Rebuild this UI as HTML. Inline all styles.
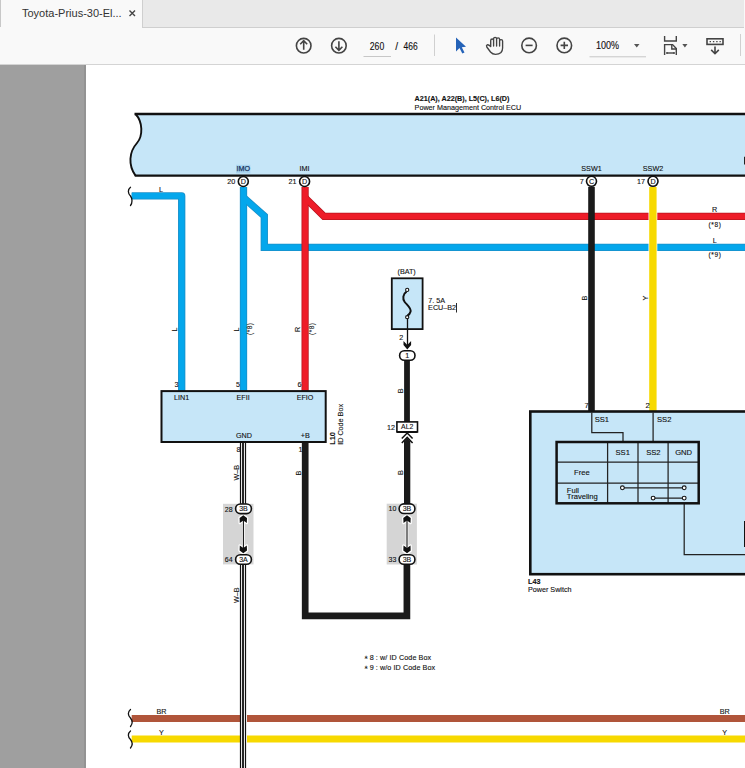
<!DOCTYPE html>
<html><head><meta charset="utf-8">
<style>
html,body{margin:0;padding:0;width:745px;height:768px;overflow:hidden;background:#fff;font-family:"Liberation Sans",sans-serif;}
#tabbar{position:absolute;left:0;top:0;width:745px;height:28px;background:#f9f9f9;}
#tabgrey{position:absolute;left:142px;top:0;width:601px;height:27px;background:#e9e9e9;border-left:1px solid #cfcfcf;border-bottom:1px solid #cfcfcf;}
#tabl{position:absolute;left:0;top:0;width:1px;height:27px;background:#c8c8c8;}
#tabtitle{position:absolute;left:22px;top:7px;font-size:11px;color:#333;white-space:nowrap;}
#toolbar{position:absolute;left:0;top:28px;width:745px;height:36px;background:#f9f9f9;}
#tbline{position:absolute;left:0;top:64px;width:745px;height:1px;background:#d4d4d4;}
#greyL{position:absolute;left:0;top:65px;width:86px;height:704px;background:#9f9f9f;}
#greyLe{position:absolute;left:84px;top:65px;width:2px;height:704px;background:#939393;}
svg{position:absolute;left:0;top:0;}
</style></head><body>
<div id="tabbar"></div>
<div id="tabl"></div>
<div id="tabgrey"></div>
<div id="tabtitle">Toyota-Prius-30-El...</div>
<div id="toolbar"></div>
<div id="tbline"></div>
<div id="greyL"></div>
<div id="greyLe"></div>

<svg width="745" height="768" viewBox="0 0 745 768">
<!-- tab close -->
<path d="M129.5,10.5 L135,16 M135,10.5 L129.5,16" stroke="#444" stroke-width="1.4"/>
<!-- toolbar icons -->
<g fill="none" stroke="#444" stroke-width="1.6">
  <circle cx="303.7" cy="45.7" r="7.3"/>
  <path d="M303.7,49.8 V40.8 M300.2,44.2 L303.7,40.6 L307.2,44.2"/>
  <circle cx="338.9" cy="45.7" r="7.3"/>
  <path d="M338.9,41.3 V50.3 M335.4,46.8 L338.9,50.4 L342.4,46.8"/>
  <circle cx="529.1" cy="45.4" r="7.3"/>
  <path d="M525.6,45.4 H532.6"/>
  <circle cx="564.3" cy="45.4" r="7.3"/>
  <path d="M560.6,45.4 H568 M564.3,41.7 V49.1"/>
</g>
<path d="M456,37.5 L456,51.5 L459.5,48 L462.3,53.5 L464.5,52.5 L461.8,47.2 L466,46.8 Z" fill="#2563b8"/>
<!-- hand -->
<path d="M490.7,46 L490.7,40.5 Q490.7,39 492.2,39 Q493.6,39 493.6,40.5 L493.6,46 L493.6,38.7 Q493.6,37.3 495.1,37.3 Q496.6,37.3 496.6,38.7 L496.6,46 L496.6,39.3 Q496.6,37.9 498.1,37.9 Q499.6,37.9 499.6,39.3 L499.6,46 L499.6,41 Q499.6,39.6 501.1,39.6 Q502.6,39.6 502.6,41 L502.6,48 Q502.6,54.3 495.5,54.3 Q492.5,54.3 490.5,52 L486.8,47 Q486,45.5 487.2,44.8 Q488.5,44.3 490.7,46.5 Z" fill="none" stroke="#444" stroke-width="1.35" stroke-linejoin="round"/>
<g fill="#3a3a3a" font-size="10.2" font-family="Liberation Sans">
<text x="369.8" y="49.5" textLength="14.4" lengthAdjust="spacingAndGlyphs">260</text>
<text x="395.3" y="49.5">/</text>
<text x="403.6" y="49.5" textLength="14.1" lengthAdjust="spacingAndGlyphs">466</text>
<text x="596" y="49" textLength="23.1" lengthAdjust="spacingAndGlyphs">100%</text>
</g>
<path d="M363.5,56.5 H391" stroke="#c7c7c7" stroke-width="1"/>
<path d="M589.5,56.8 H646" stroke="#c7c7c7" stroke-width="1"/>
<path d="M434.5,34.5 V56" stroke="#d0d0d0" stroke-width="1"/>
<path d="M740.5,34 V56" stroke="#d0d0d0" stroke-width="1"/>
<path d="M634,44 L639.5,44 L636.75,47.6 Z M682.3,44 L687.5,44 L684.9,47.6 Z" fill="#555"/>
<!-- fit icon -->
<g fill="none" stroke="#444" stroke-width="1.4">
<path d="M664.6,36 V41 H676.3 V36"/>
<path d="M664.6,55 V44.6 H672.6 L676.3,48.6 V55"/>
<path d="M671.8,44.6 V49 H676.3"/>
<path d="M667.2,53 H673.8"/>
</g>
<circle cx="667" cy="53" r="1" fill="#444"/><circle cx="674" cy="53" r="1" fill="#444"/>
<!-- keyboard icon -->
<g fill="none" stroke="#444" stroke-width="1.6">
<rect x="707" y="38.8" width="16" height="5.6"/>
<path d="M715,46.5 V53.5 M711.2,49.9 L715,53.7 L718.8,49.9"/>
</g>
<path d="M709.6,41.6 H720.8" stroke="#444" stroke-width="1.4" stroke-dasharray="1.4,1.9"/>
</svg>

<svg width="745" height="768" viewBox="0 0 745 768" style="font-family:'Liberation Sans',sans-serif">
<style>
text{fill:#111;stroke:#111;stroke-width:0.12px;}
</style>
<!-- ECU box -->
<path d="M135,114 C143,122 143,136 137,143 C129,152 128,165 135.5,175.6 L746,175.6 L746,114 Z" fill="#c6e6f8"/>
<path d="M135.5,114 C143,122 143,136 137,143 C129,152 128,165 135.5,175.6" fill="none" stroke="#111" stroke-width="1.9"/>
<path d="M134.5,114 H746 M134.8,175.6 H746" fill="none" stroke="#111" stroke-width="2.4"/>
<path d="M744.8,156.8 V164.5" stroke="#222" stroke-width="1.6"/>
<g font-size="7.2">
<text x="414.6" y="101.1" font-weight="bold">A21(A), A22(B), L5(C), L6(D)</text>
<text x="414.6" y="109.5">Power Management Control ECU</text>
</g>
<!-- wires -->
<g fill="none" stroke-width="7" stroke-linejoin="miter">
<g stroke="#1b8fc8" stroke-width="7.3">
<path d="M131.7,195.9 H181.7 V391" stroke-linejoin="round"/>
<path d="M243.5,187 V391"/>
<path d="M243.5,197.6 L264.3,216 V247.3 H746"/>
</g>
<g stroke="#04a7ec" stroke-width="5.7">
<path d="M131.7,195.9 H181.7 V391" stroke-linejoin="round"/>
<path d="M243.5,187 V391"/>
<path d="M243.5,197.6 L264.3,216 V247.3 H746"/>
</g>
<g stroke="#b8141e" stroke-width="7.2">
<path d="M305.1,187 V391"/>
<path d="M305.1,197.8 L324,216.4 H746"/>
</g>
<g stroke="#ee1c28" stroke-width="5.6">
<path d="M305.1,187 V391"/>
<path d="M305.1,197.8 L324,216.4 H746"/>
</g>
<path d="M591.5,187 V411" stroke="#1a1a1a" stroke-width="6.6"/>
<path d="M652.9,208 V256" stroke="#fff" stroke-width="8.8"/>
<path d="M652.9,187 V411" stroke="#f7d900" stroke-width="7.4"/>
<!-- black +B loop -->
<path d="M305.2,442 V615.8 H406.9 V564" stroke="#1a1a1a" stroke-width="6.7"/>
<path d="M406.9,504 V441" stroke="#1a1a1a" stroke-width="5.8"/>
<path d="M407,431 V360" stroke="#1a1a1a" stroke-width="5.8"/>
<!-- bottom wires -->
<path d="M131.7,718.5 H240 M247,718.5 H746" stroke="#b0553a" stroke-width="6.8"/>
<path d="M131.7,739 H240 M247,739 H746" stroke="#f7d900" stroke-width="6.8"/>
<!-- W-B wire -->
<path d="M243,442 V504 M243,564 V768" stroke="#111" stroke-width="6.2"/>
<path d="M243,442 V504 M243,564 V768" stroke="#fff" stroke-width="3.8"/>
<path d="M243,442 V504 M243,564 V768" stroke="#111" stroke-width="1.8"/>
</g>
<!-- braces -->
<g fill="none" stroke="#111" stroke-width="1.3" stroke-linecap="round">
<path d="M130.5,187.3 C127.5,189.5 127.8,193.5 130.5,196 C132.5,198.5 132.5,203 130.5,205.5"/>
<path d="M130.5,709.5 C127.5,712 127.8,715.5 130.5,718 C132.5,720.5 132.5,724 130.5,726.5"/>
<path d="M130.5,731 C127.5,733.5 127.8,737 130.5,739.5 C132.5,742 132.5,745.5 130.5,748"/>
</g>
<!-- ECU connectors -->
<g fill="#fff" stroke="#111" stroke-width="1.6">
<circle cx="243.3" cy="181.5" r="5"/>
<circle cx="304.6" cy="181.5" r="5"/>
<circle cx="591.5" cy="181.3" r="5"/>
<circle cx="653" cy="181.3" r="5"/>
</g>
<rect x="236" y="164.8" width="14.3" height="8.6" fill="#a9d4f0"/>
<g font-size="7.2" text-anchor="middle">
<text x="243.4" y="183.9">D</text>
<text x="304.7" y="183.9">D</text>
<text x="591.6" y="183.7">C</text>
<text x="653.1" y="183.7">D</text>
</g>
<g font-size="7.2" text-anchor="end">
<text x="235.3" y="183.9">20</text>
<text x="296.5" y="183.9">21</text>
<text x="583.7" y="183.7">7</text>
<text x="645" y="183.7">17</text>
</g>
<text x="243.3" y="170.9" font-size="7.2" text-anchor="middle" style="fill:#1a3560;stroke:#1a3560;stroke-width:0.25px">IMO</text>
<g font-size="7.2" text-anchor="middle">
<text x="304.6" y="170.9">IMI</text>
<text x="591.5" y="170.9">SSW1</text>
<text x="653" y="170.9">SSW2</text>
<text x="161" y="191.5">L</text>
<text x="714.6" y="211.9">R</text>
<text x="708.5" y="226.6" font-size="6.5" text-anchor="start" textLength="12.5" lengthAdjust="spacing">(*8)</text>
<text x="714.8" y="242.9">L</text>
<text x="708.5" y="257.3" font-size="6.5" text-anchor="start" textLength="12.5" lengthAdjust="spacing">(*9)</text>
<text x="161.5" y="714.2">BR</text>
<text x="161.3" y="734.6">Y</text>
<text x="724.7" y="714.2">BR</text>
<text x="724.7" y="734.9">Y</text>
</g>
<!-- rotated wire labels -->
<g font-size="7.2" text-anchor="middle">
<text transform="translate(177.4,329.5) rotate(-90)">L</text>
<text transform="translate(238.8,329.5) rotate(-90)">L</text>
<text transform="translate(252.3,329) rotate(-90)" font-size="6.5" textLength="12" lengthAdjust="spacing">(*8)</text>
<text transform="translate(300.2,329.5) rotate(-90)">R</text>
<text transform="translate(313.8,329) rotate(-90)" font-size="6.5" textLength="12" lengthAdjust="spacing">(*8)</text>
<text transform="translate(586.6,298.1) rotate(-90)">B</text>
<text transform="translate(648.4,298.1) rotate(-90)">Y</text>
<text transform="translate(238.7,472.8) rotate(-90)">W–B</text>
<text transform="translate(238.7,595.2) rotate(-90)">W–B</text>
<text transform="translate(301,473) rotate(-90)">B</text>
<text transform="translate(402.5,390.8) rotate(-90)">B</text>
<text transform="translate(402.5,472.5) rotate(-90)">B</text>
</g>
<!-- ID Code Box -->
<rect x="161.5" y="391.1" width="164.2" height="50.9" fill="#c6e6f8" stroke="#111" stroke-width="2"/>
<g font-size="7.2">
<text x="174" y="399.8">LIN1</text>
<text x="236.5" y="399.8">EFII</text>
<text x="296.7" y="399.8">EFIO</text>
<text x="236" y="438.2">GND</text>
<text x="300.8" y="438.2">+B</text>
<text x="174.6" y="386.6">3</text>
<text x="236" y="386.6">5</text>
<text x="297.4" y="386.6">6</text>
<text x="236.5" y="452.3">8</text>
<text x="298.5" y="452.3">1</text>
</g>
<text transform="translate(334.9,444.8) rotate(-90)" font-size="7.4" font-weight="bold">L10</text>
<text transform="translate(343.1,444.8) rotate(-90)" font-size="7.4" textLength="40.8" lengthAdjust="spacingAndGlyphs">ID Code Box</text>
<!-- fuse -->
<rect x="391.8" y="278.3" width="30.8" height="50.8" fill="#c6e6f8" stroke="#111" stroke-width="1.8"/>
<path d="M406.6,291.6 C402.8,294 402.4,299 404.7,302 C407,305 411.4,308 410.6,311.6 C410.1,313.6 408.9,314.9 407.4,315.7" fill="none" stroke="#111" stroke-width="2"/>
<circle cx="407.2" cy="289.9" r="1.6" fill="#fff" stroke="#111" stroke-width="1.1"/>
<circle cx="407.2" cy="317.2" r="1.6" fill="#fff" stroke="#111" stroke-width="1.1"/>
<path d="M407.5,318.6 V346" stroke="#111" stroke-width="1.3"/>
<path d="M403.5,341 L407.3,345 L411.1,341 L411.1,345 L407.3,349.5 L403.5,345 Z" fill="#111"/>
<g font-size="7.2">
<text x="397.5" y="273.7">(BAT)</text>
<text x="428.3" y="303.3">7. 5A</text>
<text x="428.1" y="309.5">ECU–B2</text>
<text x="399.3" y="340.3">2</text>
<text x="387" y="429.5">12</text>
</g>
<path d="M456.5,303 V312.5" stroke="#111" stroke-width="0.9"/>
<!-- pill 1 -->
<rect x="399.6" y="350.8" width="15.4" height="9.4" rx="4.7" fill="#fff" stroke="#111" stroke-width="1.6"/>
<text x="407.3" y="358.1" font-size="7.2" text-anchor="middle">1</text>
<!-- AL2 -->
<rect x="396.9" y="421.9" width="20.6" height="10" fill="#fff" stroke="#111" stroke-width="1.6"/>
<path d="M396.9,432 H417.5" stroke="#111" stroke-width="2"/>
<text x="407.2" y="429.1" font-size="6.9" text-anchor="middle">AL2</text>
<path d="M401.8,438.6 L407.2,433 L412.6,438.6" fill="none" stroke="#111" stroke-width="1.5"/>
<path d="M401.8,443 L407.2,437.4 L412.6,443" fill="none" stroke="#111" stroke-width="1.5"/>
<path d="M404.1,441 L407.2,438.2 L410.3,441 V505 H404.1 Z" fill="#1a1a1a"/>
<!-- splice groups -->
<rect x="223" y="503.8" width="30.5" height="60.6" fill="#d5d5d5"/>
<rect x="386.7" y="503.7" width="30.2" height="60.8" fill="#d5d5d5"/>
<g fill="none" stroke="#fff" stroke-width="2.6" stroke-linejoin="round">
<path d="M243.4,519 V549"/>
<path d="M407,519 V549"/>
<path d="M243.3,515.3 L247,518 L246.8,523 L243.3,520.5 L239.8,523 L239.6,518 Z"/>
<path d="M243.3,553.3 L247,550.6 L246.8,545.6 L243.3,548.1 L239.8,545.6 L239.6,550.6 Z"/>
<path d="M407,515.3 L410.7,518 L410.5,523 L407,520.5 L403.5,523 L403.3,518 Z"/>
<path d="M407,553.3 L410.7,550.6 L410.5,545.6 L407,548.1 L403.5,545.6 L403.3,550.6 Z"/>
</g>
<g fill="none" stroke="#111" stroke-width="1.1">
<path d="M243.4,519 V549"/>
<path d="M407,519 V549"/>
</g>
<g fill="#111">
<path d="M243.3,515.3 L247,518 L246.8,523 L243.3,520.5 L239.8,523 L239.6,518 Z"/>
<path d="M243.3,553.3 L247,550.6 L246.8,545.6 L243.3,548.1 L239.8,545.6 L239.6,550.6 Z"/>
<path d="M407,515.3 L410.7,518 L410.5,523 L407,520.5 L403.5,523 L403.3,518 Z"/>
<path d="M407,553.3 L410.7,550.6 L410.5,545.6 L407,548.1 L403.5,545.6 L403.3,550.6 Z"/>
</g>
<g fill="#fff" stroke="#111" stroke-width="1.6">
<rect x="235.6" y="504" width="15.8" height="9.6" rx="4.8"/>
<rect x="235.6" y="554.7" width="15.8" height="9.6" rx="4.8"/>
<rect x="399.1" y="503.9" width="15.8" height="9.6" rx="4.8"/>
<rect x="399.1" y="554.7" width="15.8" height="9.6" rx="4.8"/>
</g>
<g font-size="7" text-anchor="middle">
<text x="243.5" y="511.3">3B</text>
<text x="243.5" y="562">3A</text>
<text x="407" y="511.2">3B</text>
<text x="407" y="562">3B</text>
</g>
<g font-size="7">
<text x="224.8" y="511.6">28</text>
<text x="224.8" y="562">64</text>
<text x="388.6" y="511.4">10</text>
<text x="388.6" y="562">33</text>
</g>
<!-- Power switch -->
<rect x="530.3" y="411.5" width="230" height="162.7" fill="#c6e6f8" stroke="#111" stroke-width="2.6"/>
<g fill="none" stroke="#222" stroke-width="1.25">
<path d="M591.8,412.5 V432.6 H623 V441"/>
<path d="M653.1,412.5 V441"/>
<path d="M684.2,503 V554.6 H746"/>
<path d="M607.6,442 V503 M638,442 V503 M668.1,442 V503 M556.5,462.2 H698.7 M556.5,483.1 H698.7"/>
<path d="M624,487.8 H682.4 M654.9,498.1 H682.4"/>
</g>
<path d="M744.8,521 V547" stroke="#111" stroke-width="1.6"/>
<rect x="556.6" y="442" width="142.1" height="61.3" fill="none" stroke="#111" stroke-width="2.5"/>
<g fill="#fff" stroke="#111" stroke-width="1.1">
<circle cx="622.4" cy="487.8" r="1.9"/>
<circle cx="684.2" cy="487.8" r="1.9"/>
<circle cx="653.1" cy="498.1" r="1.9"/>
<circle cx="684.2" cy="498.1" r="1.9"/>
</g>
<g font-size="7.6">
<text x="615.5" y="455.2">SS1</text>
<text x="646.2" y="455.2">SS2</text>
<text x="675.2" y="455.2">GND</text>
<text x="574" y="475">Free</text>
<text x="566.8" y="492.8">Full</text>
<text x="566.8" y="499.2">Traveling</text>
<text x="594.7" y="421.9">SS1</text>
<text x="657" y="421.9">SS2</text>
<text x="584.4" y="407.6">7</text>
<text x="645.6" y="407.6">2</text>
</g>
<g font-size="7.2">
<text x="528" y="584.2" font-weight="bold">L43</text>
<text x="528" y="592.2">Power Switch</text>
<text x="363.6" y="659.4" font-size="4.6">∗</text><text x="369.7" y="660" textLength="61.4" lengthAdjust="spacing">8 : w/ ID Code Box</text>
<text x="363.6" y="669.2" font-size="4.6">∗</text><text x="369.7" y="669.8" textLength="65.4" lengthAdjust="spacing">9 : w/o ID Code Box</text>
</g>
</svg>
</body></html>
